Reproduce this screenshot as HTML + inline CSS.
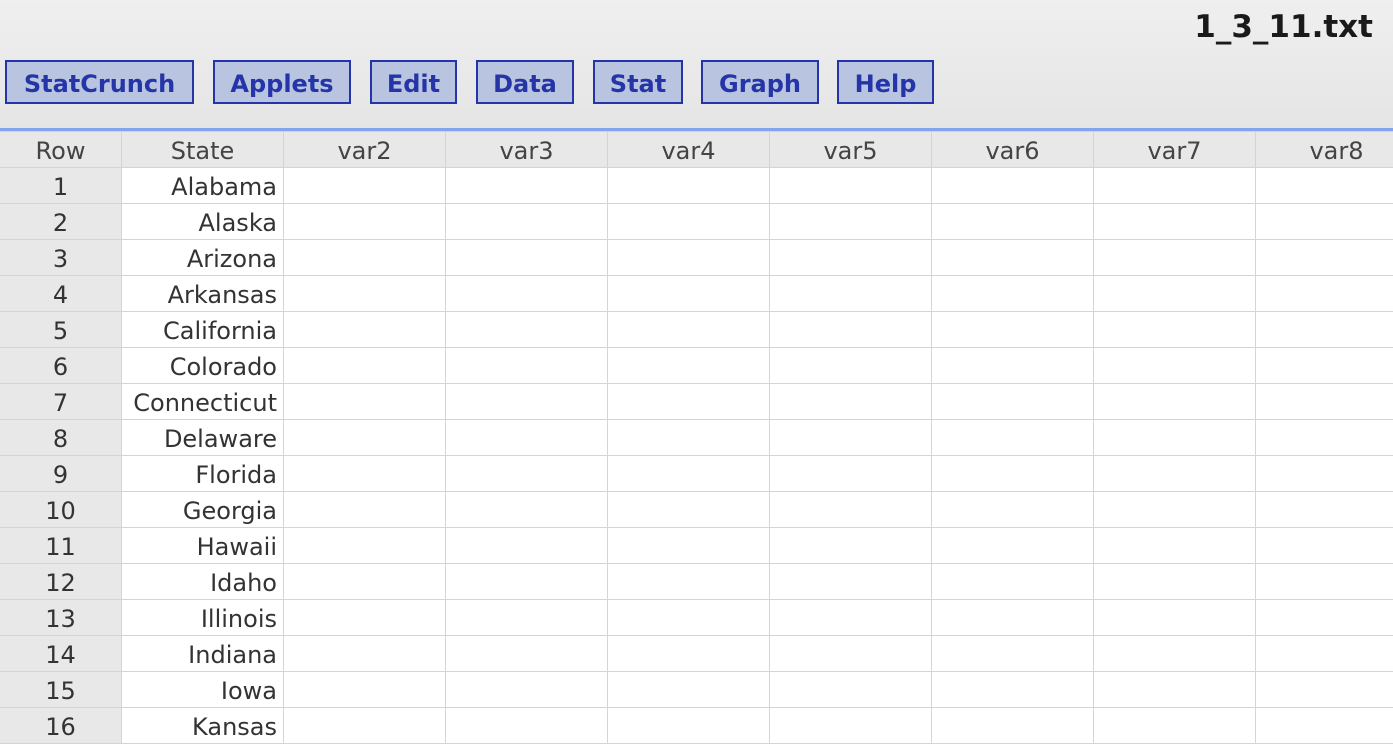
<!DOCTYPE html><html><head><style>
body{margin:0;width:1393px;height:745px;overflow:hidden;font-family:"DejaVu Sans","Liberation Sans",sans-serif;background:#fff;position:relative}
#top{position:absolute;left:0;top:0;width:1393px;height:128px;background:linear-gradient(#efefef,#e5e5e5)}
#title{position:absolute;right:20px;top:9px;font-size:31px;font-weight:bold;color:#1a1a1a}
.b{position:absolute;top:60px;height:40px;border:2px solid #2535a8;background:#b9c5e0;color:#2535a8;font-weight:bold;font-size:24px;line-height:44px;text-align:center;box-sizing:content-box}
#line{position:absolute;top:128px;left:0;width:1393px;height:3px;background:#85a3ee}
table{position:absolute;top:131px;left:-1px;border-collapse:collapse;table-layout:fixed;width:1418px}
td{border:1px solid #d4d4d4;height:32px;padding:3px 6px 0;font-size:24px;color:#333;line-height:32px;white-space:nowrap;overflow:hidden;box-sizing:content-box}
tr.h td{background:#e8e8e8;text-align:center;color:#444}
td.r{background:#e8e8e8;text-align:center;color:#333}
td.s{text-align:right}
</style></head><body>
<div id="top"><div id="title">1_3_11.txt</div>
<div class="b" style="left:5px;width:185px">StatCrunch</div>
<div class="b" style="left:213px;width:134px">Applets</div>
<div class="b" style="left:370px;width:83px">Edit</div>
<div class="b" style="left:476px;width:94px">Data</div>
<div class="b" style="left:593px;width:86px">Stat</div>
<div class="b" style="left:701px;width:114px">Graph</div>
<div class="b" style="left:837px;width:93px">Help</div>
</div>
<div id="line"></div>
<table>
<colgroup><col style="width:122px"><col style="width:162px"><col style="width:162px"><col style="width:162px"><col style="width:162px"><col style="width:162px"><col style="width:162px"><col style="width:162px"><col style="width:162px"></colgroup>
<tr class="h"><td>Row</td><td>State</td><td>var2</td><td>var3</td><td>var4</td><td>var5</td><td>var6</td><td>var7</td><td>var8</td></tr>
<tr><td class="r">1</td><td class="s">Alabama</td><td></td><td></td><td></td><td></td><td></td><td></td><td></td></tr>
<tr><td class="r">2</td><td class="s">Alaska</td><td></td><td></td><td></td><td></td><td></td><td></td><td></td></tr>
<tr><td class="r">3</td><td class="s">Arizona</td><td></td><td></td><td></td><td></td><td></td><td></td><td></td></tr>
<tr><td class="r">4</td><td class="s">Arkansas</td><td></td><td></td><td></td><td></td><td></td><td></td><td></td></tr>
<tr><td class="r">5</td><td class="s">California</td><td></td><td></td><td></td><td></td><td></td><td></td><td></td></tr>
<tr><td class="r">6</td><td class="s">Colorado</td><td></td><td></td><td></td><td></td><td></td><td></td><td></td></tr>
<tr><td class="r">7</td><td class="s">Connecticut</td><td></td><td></td><td></td><td></td><td></td><td></td><td></td></tr>
<tr><td class="r">8</td><td class="s">Delaware</td><td></td><td></td><td></td><td></td><td></td><td></td><td></td></tr>
<tr><td class="r">9</td><td class="s">Florida</td><td></td><td></td><td></td><td></td><td></td><td></td><td></td></tr>
<tr><td class="r">10</td><td class="s">Georgia</td><td></td><td></td><td></td><td></td><td></td><td></td><td></td></tr>
<tr><td class="r">11</td><td class="s">Hawaii</td><td></td><td></td><td></td><td></td><td></td><td></td><td></td></tr>
<tr><td class="r">12</td><td class="s">Idaho</td><td></td><td></td><td></td><td></td><td></td><td></td><td></td></tr>
<tr><td class="r">13</td><td class="s">Illinois</td><td></td><td></td><td></td><td></td><td></td><td></td><td></td></tr>
<tr><td class="r">14</td><td class="s">Indiana</td><td></td><td></td><td></td><td></td><td></td><td></td><td></td></tr>
<tr><td class="r">15</td><td class="s">Iowa</td><td></td><td></td><td></td><td></td><td></td><td></td><td></td></tr>
<tr><td class="r">16</td><td class="s">Kansas</td><td></td><td></td><td></td><td></td><td></td><td></td><td></td></tr>
</table>
</body></html>
